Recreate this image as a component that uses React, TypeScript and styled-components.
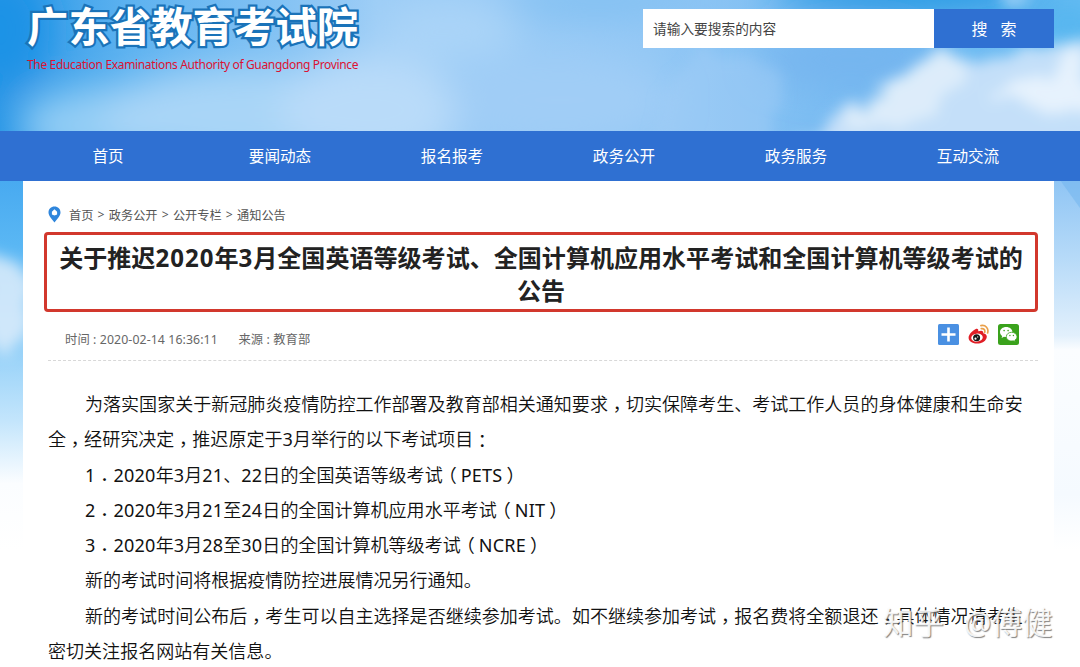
import React from 'react';
import styled, { createGlobalStyle } from 'styled-components';

const GlobalStyle = createGlobalStyle`
  * {
    box-sizing: border-box;
  }

  body {
    margin: 0;
    background: #fff;
    font-family: 'Noto Sans', 'Noto Sans CJK SC', sans-serif;
    color: #222;
  }
`;

const Page = styled.div`
  position: relative;
  width: 1080px;
  height: 667px;
  overflow: hidden;
  display: flex;
  flex-direction: column;
`;

const SkyCanvas = styled.svg`
  position: absolute;
  top: 0;
  left: 0;
  z-index: -1;
`;

const HeaderDiv = styled.header`
  display: flex;
  flex: none;
  justify-content: space-between;
  align-items: flex-start;
  height: 131px;
  padding: 0 26px 0 27px;
`;

const BrandDiv = styled.div`
  display: flex;
  flex-direction: column;
  white-space: nowrap;
`;

const BrandName = styled.h1`
  margin: 0;
  font-size: 41.4px;
  line-height: 52px;
  font-weight: 700;
  color: #fff;
  -webkit-text-stroke: 4.5px #1a73b9;
  paint-order: stroke fill;
`;

const BrandSub = styled.div`
  margin-top: 4px;
  font-size: 12px;
  line-height: 18px;
  letter-spacing: -0.34px;
  color: #dc1233;
`;

const SearchForm = styled.form`
  display: flex;
  margin-top: 9px;
  height: 39px;
`;

const SearchInput = styled.input`
  width: 291px;
  padding: 0 10px;
  border: none;
  outline: none;
  background: #fff;
  font-family: inherit;
  font-size: 13.7px;

  &::placeholder {
    color: #444;
    opacity: 1;
  }
`;

const SearchButton = styled.button`
  width: 120px;
  padding: 0 0 2px;
  border: none;
  background-color: #2f70d2;
  color: #fff;
  font-family: inherit;
  font-size: 16px;
  word-spacing: 9px;
  cursor: pointer;
`;

const Nav = styled.nav`
  display: grid;
  grid-template-columns: repeat(6, 172px);
  height: 49.5px;
  flex: none;
  padding-left: 22px;
  background-color: #2f70d2;
`;

const NavLink = styled.a`
  display: flex;
  align-items: center;
  justify-content: center;
  color: #fff;
  font-size: 15.6px;
`;

const ContentDiv = styled.main`
  flex: none;
  width: 1031px;
  margin-left: 23px;
  padding: 24px 16px 0 21px;
  background: #fff;
`;

const Breadcrumb = styled.div`
  display: flex;
  align-items: center;
  height: 20px;
  padding-left: 4px;
  font-size: 12.2px;
  color: #555;
  white-space: nowrap;

  svg {
    margin-right: 8px;
  }
`;

const Separator = styled.span`
  width: 15.4px;
  text-align: center;
`;

const TitleBox = styled.div`
  margin-top: 7.5px;
  height: 80px;
  border: 3px solid #d2382d;
  border-radius: 4px;
  padding-top: 6px;
`;

const Title = styled.h2`
  display: flex;
  flex-direction: column;
  align-items: center;
  margin: 0;
  font-size: 24.05px;
  line-height: 33px;
  font-weight: 700;
  white-space: pre;
  color: #222;
`;

const TitleNumber = styled.span`
  letter-spacing: 1px;
`;

const MetaRow = styled.div`
  display: flex;
  align-items: center;
  height: 48.5px;
  margin: 0 0 0 4px;
  padding: 4px 19px 0 17px;
  border-bottom: 1px dashed #d8d8d8;
  font-size: 12.3px;
  letter-spacing: 0.1px;
  color: #666;
`;

const MetaItem = styled.span`
  margin-right: 20.5px;
  padding-top: 3px;
  white-space: nowrap;
`;

const ShareList = styled.div`
  display: flex;
  gap: 9px;
  margin-left: auto;
  padding-bottom: 7px;
`;

const Article = styled.article`
  padding: 26.5px 0 0 4px;
  font-size: 18.05px;
  font-weight: 350;
  line-height: 35.3px;
  color: #111;
`;

const Paragraph = styled.p`
  margin: 0;
  text-indent: 37px;
  white-space: pre;
`;

const Latin = styled.span`
  font-weight: 400;
  letter-spacing: 0.2px;
`;

/* Full-width marks set in the middle of their cell, optionally dropped to the baseline */
const Mark = styled.span<{ $drop: number; $shift?: number }>`
  font-family: 'Noto Sans CJK TC', sans-serif;
  font-weight: 400;
  line-height: 0;
  vertical-align: ${(p) => -p.$drop}px;
  margin: 0 ${(p) => -(p.$shift ?? 0)}px 0 ${(p) => p.$shift ?? 0}px;
`;

const Watermark = styled.div`
  position: absolute;
  left: 883px;
  top: 600px;
  display: flex;
  gap: 20px;
  font-size: 30.5px;
  line-height: 44px;
  color: rgba(255, 255, 255, 0.9);
  text-shadow: 1px 1px 1px rgba(90, 90, 90, 0.75);
  white-space: nowrap;
`;

const navItems = ['首页', '要闻动态', '报名报考', '政务公开', '政务服务', '互动交流'];

const crumbs = ['首页', '政务公开', '公开专栏', '通知公告'];

const paragraphs = [
  '为落实国家关于新冠肺炎疫情防控工作部署及教育部相关通知要求，切实保障考生、考试工作人员的身体健康和生命安\n全，经研究决定，推迟原定于3月举行的以下考试项目：',
  '1．2020年3月21、22日的全国英语等级考试（PETS）',
  '2．2020年3月21至24日的全国计算机应用水平考试（NIT）',
  '3．2020年3月28至30日的全国计算机等级考试（NCRE）',
  '新的考试时间将根据疫情防控进展情况另行通知。',
  '新的考试时间公布后，考生可以自主选择是否继续参加考试。如不继续参加考试，报名费将全额退还，具体情况请考生\n密切关注报名网站有关信息。',
];

const marks: Record<string, { drop: number; shift?: number }> = {
  '，': { drop: 5 },
  '．': { drop: 5 },
  '：': { drop: 2 },
  '（': { drop: 0, shift: -4 },
  '）': { drop: 0, shift: 4 },
};

const renderText = (text: string) =>
  text.split(/([，．：（）]|[0-9A-Z]+)/).map((part, i) => {
    if (part in marks) {
      return (
        <Mark key={i} lang="zh-TW" $drop={marks[part].drop} $shift={marks[part].shift}>
          {part}
        </Mark>
      );
    }
    return /^[0-9A-Z]+$/.test(part) ? <Latin key={i}>{part}</Latin> : part;
  });

const Sky: React.FC = () => (
  <SkyCanvas width="1080" height="667" viewBox="0 0 1080 667">
    <defs>
      <linearGradient id="top" x1="0" y1="0" x2="1" y2="0">
        <stop offset="0" stopColor="#2a97e6" />
        <stop offset="0.12" stopColor="#5db2f0" />
        <stop offset="0.35" stopColor="#9dcdf6" />
        <stop offset="0.6" stopColor="#94c8f5" />
        <stop offset="0.8" stopColor="#74b9f1" />
        <stop offset="1" stopColor="#68bdf3" />
      </linearGradient>
      <linearGradient id="left" x1="0" y1="0" x2="0" y2="1">
        <stop offset="0" stopColor="#48aaf0" />
        <stop offset="0.18" stopColor="#5ab7f4" />
        <stop offset="0.45" stopColor="#93d0f8" />
        <stop offset="0.65" stopColor="#c3e5fc" />
        <stop offset="0.82" stopColor="#fbfdff" />
        <stop offset="1" stopColor="#fff" />
      </linearGradient>
      <linearGradient id="right" x1="0" y1="0" x2="0" y2="1">
        <stop offset="0" stopColor="#8fc5f4" />
        <stop offset="0.2" stopColor="#b4d9f8" />
        <stop offset="0.42" stopColor="#e2f0fc" />
        <stop offset="0.46" stopColor="#fbfdff" />
        <stop offset="0.85" stopColor="#f5faff" />
        <stop offset="1" stopColor="#fff" />
      </linearGradient>
      <filter id="soft" x="-50%" y="-50%" width="200%" height="200%">
        <feGaussianBlur stdDeviation="18" />
      </filter>
      <filter id="cloud" x="-20%" y="-20%" width="140%" height="140%">
        <feTurbulence type="fractalNoise" baseFrequency="0.03" numOctaves="4" seed="4" />
        <feDisplacementMap in="SourceGraphic" scale="34" xChannelSelector="R" yChannelSelector="G" />
        <feGaussianBlur stdDeviation="7" />
      </filter>
      <clipPath id="banner">
        <rect width="1080" height="132" />
      </clipPath>
    </defs>
    <rect width="1080" height="132" fill="url(#top)" />
    <g clipPath="url(#banner)">
      <g filter="url(#soft)">
        <ellipse cx="110" cy="125" rx="90" ry="38" fill="#93cdf5" />
        <ellipse cx="250" cy="115" rx="150" ry="48" fill="#a9d5f7" />
        <ellipse cx="370" cy="110" rx="90" ry="55" fill="#b9dbf9" />
        <ellipse cx="450" cy="30" rx="70" ry="30" fill="#aad4f8" />
        <ellipse cx="560" cy="100" rx="110" ry="45" fill="#a0cdf6" />
        <ellipse cx="600" cy="0" rx="100" ry="16" fill="#80bff2" />
        <ellipse cx="850" cy="60" rx="90" ry="25" fill="#76b5ef" />
        <ellipse cx="910" cy="-6" rx="140" ry="18" fill="#1f95e2" />
        <ellipse cx="1070" cy="25" rx="30" ry="20" fill="#50b4ee" />
        <ellipse cx="0" cy="30" rx="50" ry="60" fill="#1f93e6" />
      </g>
      <g filter="url(#cloud)">
        <path d="M650 150 L668 85 L700 48 L790 70 L770 150Z" fill="#a3cff6" opacity=".45" />
        <path d="M770 155 L830 125 L880 90 L935 50 L985 60 L1100 40 L1100 155Z" fill="#cde3f9" opacity=".9" />
        <path d="M840 125 L870 98 L935 50 L965 60 L960 95 L910 125Z" fill="#e0eefb" opacity=".9" />
        <path d="M990 95 L1080 50 L1100 110 L1045 112Z" fill="#e6f2fd" />
        <path d="M1000 -10 L1040 -10 L1010 14Z" fill="#b4dbfa" />
      </g>
    </g>
    <rect y="180" width="23" height="370" fill="url(#left)" />
    <g filter="url(#cloud)">
      <path d="M-14 246 L24 262 L30 320 L12 365 L-14 340Z" fill="#dcecfa" opacity=".85" />
    </g>
    <rect x="1054" y="180" width="26" height="370" fill="url(#right)" />
    <path d="M1060 180 H1080 V208Z" fill="#70b4ee" opacity=".5" />
  </SkyCanvas>
);

const PinIcon: React.FC = () => (
  <svg width="13" height="17" viewBox="0 0 13 17">
    <path
      d="M6.5 .5C3 .5 .5 3.1 .5 6.4C.5 10 4 12.8 6.5 16.5C9 12.8 12.5 10 12.5 6.4C12.5 3.1 10 .5 6.5 .5Z"
      fill="#2f86dc"
    />
    <path d="M6.5 3.2L9.1 5.7V8.6L6.5 9.4L3.9 8.6V5.7Z" fill="#fff" />
  </svg>
);

const MoreIcon: React.FC = () => (
  <svg width="21" height="21" viewBox="0 0 21 21">
    <rect width="21" height="21" rx="1.5" fill="#4a90e2" />
    <path d="M10.5 3.5V17.5M3.5 10.5H17.5" stroke="#fff" strokeWidth="2.6" />
  </svg>
);

const WeiboIcon: React.FC = () => (
  <svg width="21" height="21" viewBox="0 0 21 21">
    <path
      d="M7.4 5.3C9.4 4.2 10.8 5.2 10.2 7.3C13.4 6 15.8 6.6 15.2 9.3C18.4 10 19.6 12 18.4 14.5C17 17.8 13 19.8 8.8 19.6C4 19.4 .6 17.2 .6 13.8C.6 10.8 3.8 7.2 7.4 5.3Z"
      fill="#e01d25"
    />
    <ellipse cx="9" cy="13.6" rx="5.8" ry="4" fill="#fff" transform="rotate(-7 9 13.6)" />
    <circle cx="8.6" cy="13.8" r="3.5" fill="#151515" />
    <circle cx="7.5" cy="14.7" r="1.1" fill="#fff" />
    <circle cx="9.7" cy="12.9" r=".6" fill="#fff" />
    <path
      d="M12.9 1.6C17.6 .6 21 4.4 19.6 9M13.3 4.7C15.7 4.2 17.3 6 16.7 8.2"
      fill="none"
      stroke="#eaa04a"
      strokeWidth="1.7"
      strokeLinecap="round"
    />
  </svg>
);

const WechatIcon: React.FC = () => (
  <svg width="21" height="21" viewBox="0 0 21 21">
    <rect width="21" height="21" rx="2.5" fill="#3aa21c" />
    <path
      d="M8.2 3C4.7 3 2 5.2 2 8C2 9.6 2.8 11 4.2 11.9L3.6 14L6 12.7C9.8 13.7 14.4 11.6 14.4 8C14.4 5.2 11.7 3 8.2 3Z"
      fill="#fff"
    />
    <path
      d="M13.6 8.3C10.6 8.3 8.3 10.2 8.3 12.7C8.3 15.6 11.8 17.7 15.3 16.8L17.3 18L16.8 16.1C18.2 15.3 19 14.1 19 12.7C19 10.2 16.6 8.3 13.6 8.3Z"
      fill="#fff"
      stroke="#3aa21c"
      strokeWidth=".8"
    />
    <g fill="#3aa21c">
      <circle cx="6.1" cy="6.6" r=".8" />
      <circle cx="10.1" cy="6.6" r=".8" />
      <circle cx="11.9" cy="11.5" r=".7" />
      <circle cx="15.4" cy="11.5" r=".7" />
    </g>
  </svg>
);

const App: React.FC = () => {
  return (
    <Page lang="zh-CN">
      <GlobalStyle />
      <Sky />
      <HeaderDiv>
        <BrandDiv>
          <BrandName>广东省教育考试院</BrandName>
          <BrandSub>The Education Examinations Authority of Guangdong Province</BrandSub>
        </BrandDiv>
        <SearchForm onSubmit={(e) => e.preventDefault()}>
          <SearchInput placeholder="请输入要搜索的内容" />
          <SearchButton type="submit">搜 索</SearchButton>
        </SearchForm>
      </HeaderDiv>
      <Nav>
        {navItems.map((item) => (
          <NavLink key={item}>{item}</NavLink>
        ))}
      </Nav>
      <ContentDiv>
        <Breadcrumb>
          <PinIcon />
          {crumbs.map((crumb, i) => (
            <React.Fragment key={crumb}>
              {i > 0 && <Separator>&gt;</Separator>}
              <span>{crumb}</span>
            </React.Fragment>
          ))}
        </Breadcrumb>
        <TitleBox>
          <Title>
            <span>
              关于推迟<TitleNumber>2020</TitleNumber>年<TitleNumber>3</TitleNumber>
              月全国英语等级考试、全国计算机应用水平考试和全国计算机等级考试的
            </span>
            <span>公告</span>
          </Title>
        </TitleBox>
        <MetaRow>
          <MetaItem>时间 : 2020-02-14 16:36:11</MetaItem>
          <MetaItem>来源 : 教育部</MetaItem>
          <ShareList>
            <MoreIcon />
            <WeiboIcon />
            <WechatIcon />
          </ShareList>
        </MetaRow>
        <Article>
          {paragraphs.map((text) => (
            <Paragraph key={text}>{renderText(text)}</Paragraph>
          ))}
        </Article>
      </ContentDiv>
      <Watermark>
        <span>知乎</span>
        <span>@傅健</span>
      </Watermark>
    </Page>
  );
};

export default App;
